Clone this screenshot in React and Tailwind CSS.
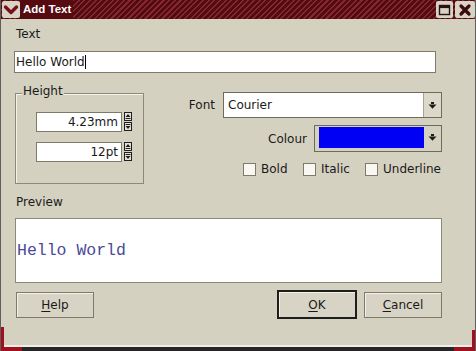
const DropArrow = () => (
  <svg width="9" height="9" viewBox="0 0 9 9">
    <rect x="3" y="1" width="3" height="2" fill="#1c1c1c" />
    <polygon points="0.5,3.5 8.5,3.5 4.5,7.8" fill="#1c1c1c" />
  </svg>
);

const SpinBtns = () => (
  <div className="flex flex-col gap-[1px] ml-[2px]">
    <div className="w-[8px] h-[9px] border border-[#1f1f1f] bg-[#e4e1d6] flex items-center justify-center">
      <svg width="6" height="7" viewBox="0 0 6 7">
        <polygon points="0.5,4 3,1 5.5,4" fill="#1f1f1f" />
        <rect x="0.5" y="5" width="5" height="1" fill="#1f1f1f" />
      </svg>
    </div>
    <div className="w-[8px] h-[9px] border border-[#1f1f1f] bg-[#e4e1d6] flex items-center justify-center">
      <svg width="6" height="7" viewBox="0 0 6 7">
        <rect x="0.5" y="1" width="5" height="1" fill="#1f1f1f" />
        <polygon points="0.5,3 3,6 5.5,3" fill="#1f1f1f" />
      </svg>
    </div>
  </div>
);

const Check = ({ label, w }) => (
  <div className={`flex items-center gap-[5px] ${w}`}>
    <div className="w-[13px] h-[13px] border border-[#7f7b6b] bg-[#f8f7f2]" />
    <span className="leading-[14px]">{label}</span>
  </div>
);

export default function App() {
  return (
    <div className="w-[476px] h-[351px] relative overflow-hidden bg-[#d5d1c1] border-l border-r border-[#5e5e5e] flex flex-col font-['DejaVu_Sans',sans-serif] text-[12px] text-[#1a1a1a]">
      {/* Title bar */}
      <div className="h-[19px] flex items-stretch bg-[repeating-linear-gradient(135deg,#520b10_0px,#520b10_2.5px,#86262e_2.5px,#86262e_4px)] shrink-0">
        <div className="w-[18px] my-[1px] ml-[1px] bg-[#d8d4c5] rounded-[2px] flex items-center justify-center">
          <svg width="16" height="14" viewBox="0 0 16 14">
            <path d="M2.5 4 L8 9.5 L13.5 4" fill="none" stroke="#7a0f1c" strokeWidth="3.4" strokeLinecap="round" strokeLinejoin="round" />
          </svg>
        </div>
        <div className="bg-[#560b11] pl-[3px] pr-[2px] text-white font-bold font-['Liberation_Sans',sans-serif] text-[11.5px] leading-[19px]">
          Add Text
        </div>
        <div className="flex-1" />
        <div className="w-[17px] my-[1px] bg-[#d8d4c5] rounded-[2px] flex items-center justify-center">
          <svg width="13" height="12" viewBox="0 0 13 12">
            <rect x="1.5" y="1.5" width="10" height="9" fill="none" stroke="#2a1214" strokeWidth="1.4" />
            <rect x="1.5" y="1.5" width="10" height="2.6" fill="#2a1214" />
          </svg>
        </div>
        <div className="w-[20px] my-[1px] ml-[2px] bg-[#d8d4c5] rounded-[2px] flex items-center justify-center">
          <svg width="14" height="14" viewBox="0 0 14 14">
            <path d="M3 3 L11 11 M11 3 L3 11" stroke="#3a0a0c" strokeWidth="3.2" strokeLinecap="round" />
          </svg>
        </div>
      </div>

      {/* Body */}
      <div className="flex-1 flex flex-col pl-[13px] pr-[33px]">
        <div className="mt-[8px] leading-[14px] pl-[2px]">Text</div>
        <div className="mt-[10px] w-[422px] h-[22px] border border-[#7e7a6b] bg-white flex items-center pl-[1px] leading-[14px]">
          <span>Hello World</span>
          <span className="inline-block w-[1px] h-[14px] bg-black" />
        </div>

        {/* middle */}
        <div className="mt-[19px] flex h-[92px]">
          <div className="relative mt-[1px] ml-[1px] w-[129px] h-[91px] border border-[#8d8979] shadow-[inset_1px_1px_0_#f4f2ea] pl-[20px] pt-[18px] flex flex-col gap-[10px]">
            <span className="absolute left-[6px] -top-[10px] bg-[#d5d1c1] px-[1px] leading-[14px]">Height</span>
            <div className="flex items-start">
              <div className="w-[86px] h-[20px] border border-[#7e7a6b] bg-white flex items-center justify-end pr-[3px] leading-[14px]">4.23mm</div>
              <SpinBtns />
            </div>
            <div className="flex items-start">
              <div className="w-[86px] h-[20px] border border-[#7e7a6b] bg-white flex items-center justify-end pr-[3px] leading-[14px]">12pt</div>
              <SpinBtns />
            </div>
          </div>

          <div className="flex-1 flex flex-col items-end">
            <div className="flex items-center">
              <span className="mr-[8px] leading-[14px]">Font</span>
              <div className="w-[219px] h-[26px] border border-[#6f6b5c] flex">
                <div className="flex-1 bg-white flex items-center pl-[4px] leading-[14px] border-r border-[#a8a493]">Courier</div>
                <div className="w-[17px] bg-[#dcd8ca] flex items-center justify-center">
                  <DropArrow />
                </div>
              </div>
            </div>
            <div className="mt-[7px] flex items-center">
              <span className="mr-[7px] leading-[14px]">Colour</span>
              <div className="w-[128px] h-[27px] border border-[#6f6b5c] bg-[#d5d1c1] flex pl-[4px] pt-[1px] pb-[3px]">
                <div className="flex-1 bg-[#0000f4]" />
                <div className="w-[17px] flex items-center justify-center">
                  <DropArrow />
                </div>
              </div>
            </div>
            <div className="mt-[10px] w-[199px] flex">
              <Check label="Bold" w="w-[60px]" />
              <Check label="Italic" w="w-[62px]" />
              <Check label="Underline" w="" />
            </div>
          </div>
        </div>

        <div className="mt-[11px] leading-[14px] pl-[2px]">Preview</div>
        <div className="mt-[9px] ml-[1px] w-[427px] h-[65px] border border-[#8d8979] bg-white pl-[1px] pt-[23px]">
          <span className="font-['Liberation_Mono',monospace] text-[16.5px] leading-[18px] text-[#4a4a98]">Hello World</span>
        </div>

        <div className="mt-[7px] h-[29px] flex items-center">
          <button className="ml-[2px] w-[78px] h-[26px] border border-[#7e7a6b] bg-[#d8d4c5] shadow-[inset_1px_1px_0_#f2f0e8] leading-[14px]">
            <span className="underline underline-offset-2">H</span>elp
          </button>
          <div className="flex-1" />
          <button className="w-[80px] h-[29px] border-2 border-[#1e1e1e] bg-[#d8d4c5] shadow-[inset_1px_1px_0_#f2f0e8] leading-[14px]">
            <span className="underline underline-offset-2">O</span>K
          </button>
          <button className="ml-[7px] w-[78px] h-[26px] border border-[#7e7a6b] bg-[#d8d4c5] shadow-[inset_1px_1px_0_#f2f0e8] leading-[14px]">
            <span className="underline underline-offset-2">C</span>ancel
          </button>
        </div>
      </div>

      {/* bottom frame */}
      <div className="h-[6px] shrink-0 border-t-2 border-[#f0eee6] bg-[#262626]" />

      {/* red frame corners */}
      <div className="absolute left-0 bottom-0 w-[3px] h-[24px] bg-[#a0101e]" />
      <div className="absolute left-0 bottom-0 w-[21px] h-[4px] bg-[#a0101e]" />
      <div className="absolute right-0 bottom-0 w-[3px] h-[21px] bg-[#a0101e]" />
      <div className="absolute right-0 bottom-0 w-[21px] h-[4px] bg-[#a0101e]" />
    </div>
  );
}
